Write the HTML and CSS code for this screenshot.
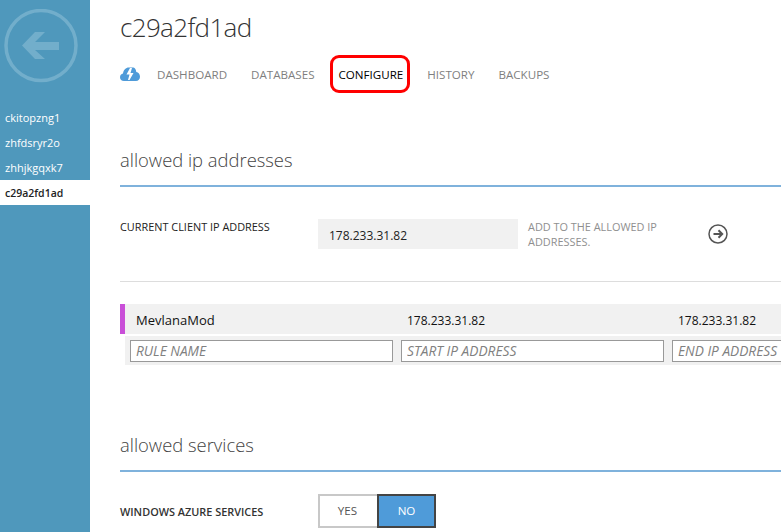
FILE: index.html
```html
<!DOCTYPE html>
<html lang="en">
  <head>
    <meta charset="UTF-8" />
    <title>c29a2fd1ad - configure</title>
    <link rel="stylesheet" href="styles.css">
  </head>
  <body>
    <div class="sidebar">
      <svg class="back-icon" width="74" height="74" viewBox="0 0 74 74">
        <circle cx="37" cy="36.500" r="35" fill="none" stroke="#72aecb" stroke-width="3.500" />
        <path d="M41 23 L31 33 L55 33 L55 41 L31 41 L41 50 L31 50 L18 36.500 L31 23 Z" fill="#72aecb" />
      </svg>
      <ul class="db-list">
        <li>ckitopzng1</li>
        <li>zhfdsryr2o</li>
        <li>zhhjkgqxk7</li>
        <li class="selected">c29a2fd1ad</li>
      </ul>
    </div>

    <div class="content">
      <h1>c29a2fd1ad</h1>

      <div class="tabs">
        <svg class="cloud-icon" width="20" height="14" viewBox="0 0 20 14">
          <path d="M4 14 C1.500 14 0 12.300 0 10.200 C0 8.200 1.300 6.800 3 6.500 C3.500 3 5.800 0.500 8.800 0.500 L13.500 0.500 C15 0.800 16 2.500 16.300 5 C18.500 5.300 20 7.200 20 9.700 C20 12.300 18.300 14 16 14 Z" fill="#4f9bd9" />
          <path d="M10 1 L6.500 7.500 L9.500 7.500 L8 13 L9.500 13 L13.500 6 L10.500 6 L12 1 Z" fill="#fff" />
        </svg>
        <span class="tab">DASHBOARD</span>
        <span class="tab">DATABASES</span>
        <span class="tab active">CONFIGURE</span>
        <span class="tab">HISTORY</span>
        <span class="tab">BACKUPS</span>
      </div>

      <h2 class="section-title first">allowed ip addresses</h2>

      <div class="client-row">
        <div class="field-label">CURRENT CLIENT IP ADDRESS</div>
        <div class="ip-box">178.233.31.82</div>
        <div class="add-text">ADD TO THE ALLOWED IP ADDRESSES.</div>
        <svg class="go-icon" width="20" height="20" viewBox="0 0 20 20">
          <circle cx="10" cy="10" r="9" fill="none" stroke="#555" stroke-width="1.500" />
          <path d="M5.500 10 H14 M10.500 6.300 L14.200 10 L10.500 13.700" fill="none" stroke="#555" stroke-width="2" />
        </svg>
      </div>

      <div class="divider"></div>

      <div class="rule-row">
        <div class="rule-name">MevlanaMod</div>
        <div class="rule-start">178.233.31.82</div>
        <div class="rule-end">178.233.31.82</div>
      </div>
      <div class="rule-inputs">
        <input type="text" placeholder="RULE NAME" />
        <input type="text" placeholder="START IP ADDRESS" />
        <input type="text" placeholder="END IP ADDRESS" />
      </div>

      <h2 class="section-title second">allowed services</h2>

      <div class="service-row">
        <div class="field-label">WINDOWS AZURE SERVICES</div>
        <div class="toggle">
          <span class="toggle-yes">YES</span>
          <span class="toggle-no">NO</span>
        </div>
      </div>
    </div>
  </body>
</html>
```

FILE: styles.css
```css
/* Page */
html,
body {
  height: 100%;
  overflow: hidden;
}

body {
  margin: 0;
  display: flex;
  width: 781px;
  font-family: "Open Sans", "Noto Sans", sans-serif;
  background-color: #ffffff;
  color: #333;
}

/* Left column */
.sidebar {
  flex: 0 0 90px;
  background-color: #4f98bc;
}

.back-icon {
  display: block;
  margin: 9px 0 0 4px;
}

.db-list {
  list-style: none;
  margin: 22px 0 0;
  padding: 0;
}

.db-list li {
  height: 25px;
  line-height: 25px;
  padding-left: 5px;
  font-size: 11px;
  color: #ffffff;
}

.db-list li.selected {
  background-color: #ffffff;
  color: #222;
  line-height: 27px;
  font-size: 10.500px;
  font-weight: 600;
}

/* Main area */
.content {
  flex: 0 0 691px;
  padding-left: 30px;
  box-sizing: border-box;
}

h1 {
  margin: 9px 0 0;
  font-size: 26px;
  line-height: 36px;
  font-weight: 300;
  letter-spacing: -0.650px;
  color: #333;
}

/* Tabs */
.tabs {
  display: flex;
  align-items: center;
  gap: 24px;
  height: 20px;
  margin-top: 19px;
}

.cloud-icon {
  margin-right: -7px;
}

.tab {
  position: relative;
  font-size: 11.600px;
  color: #7f7f7f;
}

.tab.active {
  color: #000;
}

/* red box drawn round the current tab */
.tab.active::after {
  content: "";
  position: absolute;
  left: -9px;
  right: -7px;
  top: -12px;
  bottom: -11px;
  border: 3px solid #f00;
  border-radius: 9px;
}

/* Section headings */
.section-title {
  margin: 0;
  height: 40px;
  font-size: 18.400px;
  line-height: 30px;
  font-weight: 300;
  color: #444;
  border-bottom: 2px solid #7fb2dc;
}

.section-title.first {
  margin-top: 61px;
}

.section-title.second {
  margin-top: 65px;
}

.field-label {
  flex: 0 0 198px;
  font-size: 10.900px;
  font-weight: 500;
  color: #222;
}

/* Client ip row */
.client-row {
  display: flex;
  align-items: flex-start;
  margin-top: 32px;
  width: 631px;
}

.client-row .field-label {
  line-height: 16px;
}

.ip-box {
  flex: 0 0 200px;
  box-sizing: border-box;
  height: 30px;
  line-height: 33px;
  padding-left: 11px;
  background-color: #f1f1f1;
  font-size: 12px;
  color: #222;
}

.add-text {
  flex: 0 0 150px;
  margin-left: 10px;
  font-size: 10.900px;
  line-height: 15px;
  font-weight: 500;
  color: #8f8f8f;
}

.go-icon {
  margin: 5px 0 0 30px;
}

.divider {
  height: 1px;
  margin-top: 32px;
  background-color: #dddddd;
}

/* Firewall rules */
.rule-row {
  display: grid;
  grid-template-columns: 282px 271px 1fr;
  margin-top: 22px;
  height: 30px;
  line-height: 33px;
  font-size: 12px;
  color: #111;
  background-color: #f1f1f1;
  border-left: 5px solid #c94fd8;
}

.rule-name {
  padding-left: 11px;
  font-size: 13px;
}

.rule-inputs {
  display: flex;
  gap: 8px;
  margin: 2px 0 0 5px;
  padding: 4px 0 3px 5px;
  height: 22px;
  overflow: hidden;
  background-color: #f1f1f1;
}

.rule-inputs input {
  flex: 0 0 263px;
  box-sizing: border-box;
  height: 22px;
  margin: 0;
  padding: 0 5px 2px;
  border: 1px solid #999;
  border-radius: 0;
  font-family: inherit;
  font-size: 13.700px;
  font-style: italic;
  background-color: #ffffff;
}

.rule-inputs input::placeholder {
  color: #808080;
  opacity: 1;
}

/* Allowed services */
.service-row {
  display: flex;
  align-items: center;
  margin-top: 22px;
}

.service-row .field-label {
  font-size: 10.900px;
  font-weight: 600;
  color: #333;
}

.toggle {
  display: flex;
  height: 34px;
  font-size: 11.600px;
}

.toggle span {
  box-sizing: border-box;
  width: 59px;
  line-height: 30px;
  text-align: center;
  border-width: 2px;
  border-style: solid;
}

.toggle-yes {
  border-color: #c8c8c8;
  border-right: none !important;
  color: #555;
  padding-right: 2px;
}

.toggle-no {
  border-color: #444;
  background-color: #4f9bd9;
  color: #ffffff;
}
```
